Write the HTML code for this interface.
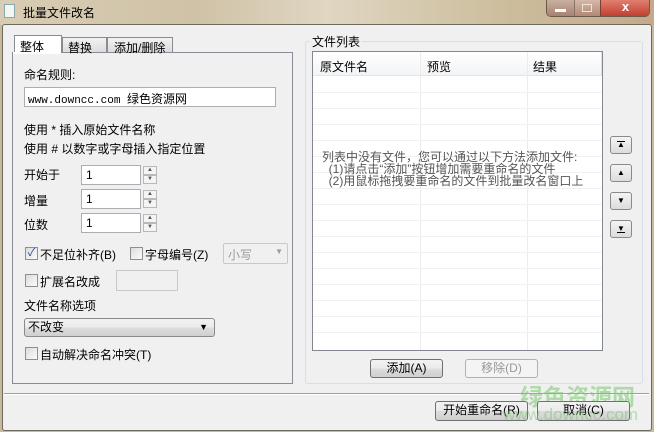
<!DOCTYPE html>
<html><head><meta charset="utf-8"><style>
*{box-sizing:border-box;margin:0;padding:0}
body{width:654px;height:432px;overflow:hidden;position:relative;background:#c9b99c;font-family:"Liberation Sans","Noto Sans CJK SC","WenQuanYi Zen Hei",sans-serif;font-size:12px;color:#000}
.a{position:absolute}
.title{left:0;top:0;width:654px;height:25px;background:linear-gradient(90deg,#d8ccb4 0%,#cfc2a6 30%,#e0d6c2 50%,#cdbf9f 75%,#c4a98a 100%)}
.win{left:2px;top:24px;width:650px;height:407px;background:#f0f0f0;border:1px solid #6f6a60;border-radius:3px}
.inp{background:#fff;border:1px solid #abadb3}
.btn{border:1px solid #707070;border-radius:3px;background:linear-gradient(#f2f2f2,#ebebeb 50%,#dddddd 51%,#cfcfcf);text-align:center;font-size:12px;line-height:17px}
.cb{width:13px;height:13px;border:1px solid #8e8f8f;background:linear-gradient(135deg,#dcdcdc,#fbfbfb)}
.spin{width:14px;height:9px;border:1px solid #b9b9b9;background:#f4f4f4;font-size:6px;line-height:7px;text-align:center;color:#555}
.grid{position:absolute;left:0;width:100%;height:1px;background:#f0f0f0}
.sb{width:22px;height:18px;border:1px solid #8a8a8a;border-radius:3px;background:linear-gradient(#f4f4f4,#dcdcdc);text-align:center;font-size:8px;line-height:16px}
</style></head><body>
<div class="a title"></div>
<div class="a" style="left:4px;top:4px;width:11px;height:14px;background:#f4f4f4;border:1px solid #8aa;"></div>
<div class="a" style="left:23px;top:4px;font-size:12px;color:#000">批量文件改名</div>
<div class="a" style="left:546px;top:0;width:104px;height:17px;border:1px solid #6b5a4a;border-top:none;border-radius:0 0 5px 5px;overflow:hidden">
 <div class="a" style="left:0;top:0;width:27px;height:16px;background:linear-gradient(#c9b0a0,#a88070)"></div>
 <div class="a" style="left:27px;top:0;width:26px;height:16px;background:linear-gradient(#d6b8a8,#b08878);border-left:1px solid #8a7060"></div>
 <div class="a" style="left:53px;top:0;width:50px;height:16px;background:linear-gradient(#e08070,#c04030);border-left:1px solid #7a4030;color:#fff;font-weight:bold;text-align:center;line-height:14px;font-size:13px">x</div>
 <div class="a" style="left:8px;top:9px;width:11px;height:3px;background:#fff"></div>
 <div class="a" style="left:35px;top:4px;width:10px;height:8px;border:1px solid #f0e0d8"></div>
</div>
<div class="a win"></div>
<div class="a" style="left:12px;top:52px;width:281px;height:332px;border:1px solid #898c95;background:#f0f0f0"></div>
<div class="a" style="left:14px;top:35px;width:48px;height:18px;background:#fff;border:1px solid #898c95;border-bottom:none;padding:2px 0 0 5px">整体</div>
<div class="a" style="left:62px;top:37px;width:45px;height:16px;background:linear-gradient(#f2f2f2,#dcdcdc);border:1px solid #898c95;padding:1px 0 0 5px">替换</div>
<div class="a" style="left:107px;top:37px;width:66px;height:16px;background:linear-gradient(#f2f2f2,#dcdcdc);border:1px solid #898c95;padding:1px 0 0 6px">添加/删除</div>
<div class="a" style="left:13px;top:52px;width:48px;height:2px;background:#fff"></div>
<div class="a" style="left:24px;top:66px">命名规则:</div>
<div class="a inp" style="left:24px;top:87px;width:252px;height:20px;padding:2px 0 0 3px;font-family:'Liberation Mono','Noto Sans CJK SC',monospace;font-size:11px">www.downcc.com <span style="font-family:'Liberation Sans','Noto Sans CJK SC',sans-serif;font-size:12px">绿色资源网</span></div>
<div class="a" style="left:24px;top:121px">使用 * 插入原始文件名称</div>
<div class="a" style="left:24px;top:140px">使用 # 以数字或字母插入指定位置</div>
<div class="a" style="left:24px;top:166px">开始于</div>
<div class="a" style="left:24px;top:192px">增量</div>
<div class="a" style="left:24px;top:216px">位数</div>
<div class="a inp" style="left:81px;top:165px;width:60px;height:20px;padding:2px 4px">1</div>
<div class="a inp" style="left:81px;top:189px;width:60px;height:20px;padding:2px 4px">1</div>
<div class="a inp" style="left:81px;top:213px;width:60px;height:20px;padding:2px 4px">1</div>
<div class="a spin" style="left:143px;top:166px">▲</div><div class="a spin" style="left:143px;top:175px">▼</div>
<div class="a spin" style="left:143px;top:190px">▲</div><div class="a spin" style="left:143px;top:199px">▼</div>
<div class="a spin" style="left:143px;top:214px">▲</div><div class="a spin" style="left:143px;top:223px">▼</div>
<div class="a cb" style="left:25px;top:247px;color:#2a4a8a;font-size:11px;line-height:10px;text-align:center">✓</div>
<div class="a" style="left:40px;top:246px">不足位补齐(B)</div>
<div class="a cb" style="left:130px;top:247px"></div>
<div class="a" style="left:145px;top:246px">字母编号(Z)</div>
<div class="a" style="left:223px;top:243px;width:65px;height:21px;border:1px solid #c8c8c8;border-radius:2px;color:#999;padding:2px 4px;font-size:12px">小写<span style="position:absolute;right:4px;top:3px;font-size:8px">▼</span></div>
<div class="a cb" style="left:25px;top:274px"></div>
<div class="a" style="left:40px;top:273px">扩展名改成</div>
<div class="a" style="left:116px;top:270px;width:62px;height:21px;border:1px solid #c8c8c8;background:#f0f0f0"></div>
<div class="a" style="left:24px;top:297px">文件名称选项</div>
<div class="a btn" style="left:24px;top:318px;width:191px;height:19px;text-align:left;padding-left:3px;border-color:#8a8a8a">不改变<span style="position:absolute;right:6px;top:0;font-size:9px">▼</span></div>
<div class="a cb" style="left:25px;top:347px"></div>
<div class="a" style="left:40px;top:346px">自动解决命名冲突(T)</div>
<div class="a" style="left:305px;top:41px;width:338px;height:343px;border:1px solid #d5dfe5;border-radius:3px"></div>
<div class="a" style="left:310px;top:33px;background:#f0f0f0;padding:0 2px">文件列表</div>
<div class="a" style="left:312px;top:51px;width:291px;height:300px;border:1px solid #828790;background:#fff;overflow:hidden">
 <div class="a" style="left:0;top:0;width:288px;height:24px;background:linear-gradient(#fff,#f3f4f6);border-bottom:1px solid #e5e5e5"></div>
 <div class="a" style="left:7px;top:6px">原文件名</div>
 <div class="a" style="left:114px;top:6px">预览</div>
 <div class="a" style="left:220px;top:6px">结果</div>
 <div class="a" style="left:107px;top:0;width:1px;height:300px;background:#ececec"></div>
 <div class="a" style="left:214px;top:0;width:1px;height:300px;background:#ececec"></div>
 <div class="a" style="left:288px;top:0;width:1px;height:24px;background:#e0e0e0"></div>
 <div class="grid" style="top:40px"></div><div class="grid" style="top:56px"></div><div class="grid" style="top:72px"></div><div class="grid" style="top:88px"></div><div class="grid" style="top:104px"></div><div class="grid" style="top:120px"></div><div class="grid" style="top:136px"></div><div class="grid" style="top:152px"></div><div class="grid" style="top:168px"></div><div class="grid" style="top:184px"></div><div class="grid" style="top:200px"></div><div class="grid" style="top:216px"></div><div class="grid" style="top:232px"></div><div class="grid" style="top:248px"></div><div class="grid" style="top:264px"></div><div class="grid" style="top:280px"></div>
 <div class="a" style="left:9px;top:99px;color:#555;line-height:12px;white-space:pre">列表中没有文件，您可以通过以下方法添加文件:
  (1)请点击“添加”按钮增加需要重命名的文件
  (2)用鼠标拖拽要重命名的文件到批量改名窗口上</div>
</div>
<div class="a sb" style="left:610px;top:136px">▲</div>
<div class="a sb" style="left:610px;top:164px">▲</div>
<div class="a sb" style="left:610px;top:192px">▼</div>
<div class="a sb" style="left:610px;top:220px">▼</div>
<div class="a" style="left:617px;top:141px;width:8px;height:1px;background:#000"></div>
<div class="a" style="left:617px;top:232px;width:8px;height:1px;background:#000"></div>
<div class="a btn" style="left:370px;top:359px;width:73px;height:19px">添加(A)</div>
<div class="a btn" style="left:465px;top:359px;width:73px;height:19px;color:#999;border-color:#adb2b5;background:#f4f4f4">移除(D)</div>
<div class="a" style="left:4px;top:393px;width:645px;height:1px;background:#a0a0a0"></div>
<div class="a" style="left:4px;top:394px;width:645px;height:1px;background:#fff"></div>
<div class="a" style="left:520px;top:378px;font-size:23px;font-weight:bold;color:rgba(120,200,110,0.55)">绿色资源网</div>
<div class="a btn" style="left:435px;top:401px;width:93px;height:20px">开始重命名(R)</div>
<div class="a btn" style="left:537px;top:401px;width:93px;height:20px">取消(C)</div>
<div class="a" style="left:503px;top:405px;font-size:17px;color:rgba(120,200,110,0.5)">www.downcc.com</div>
</body></html>
